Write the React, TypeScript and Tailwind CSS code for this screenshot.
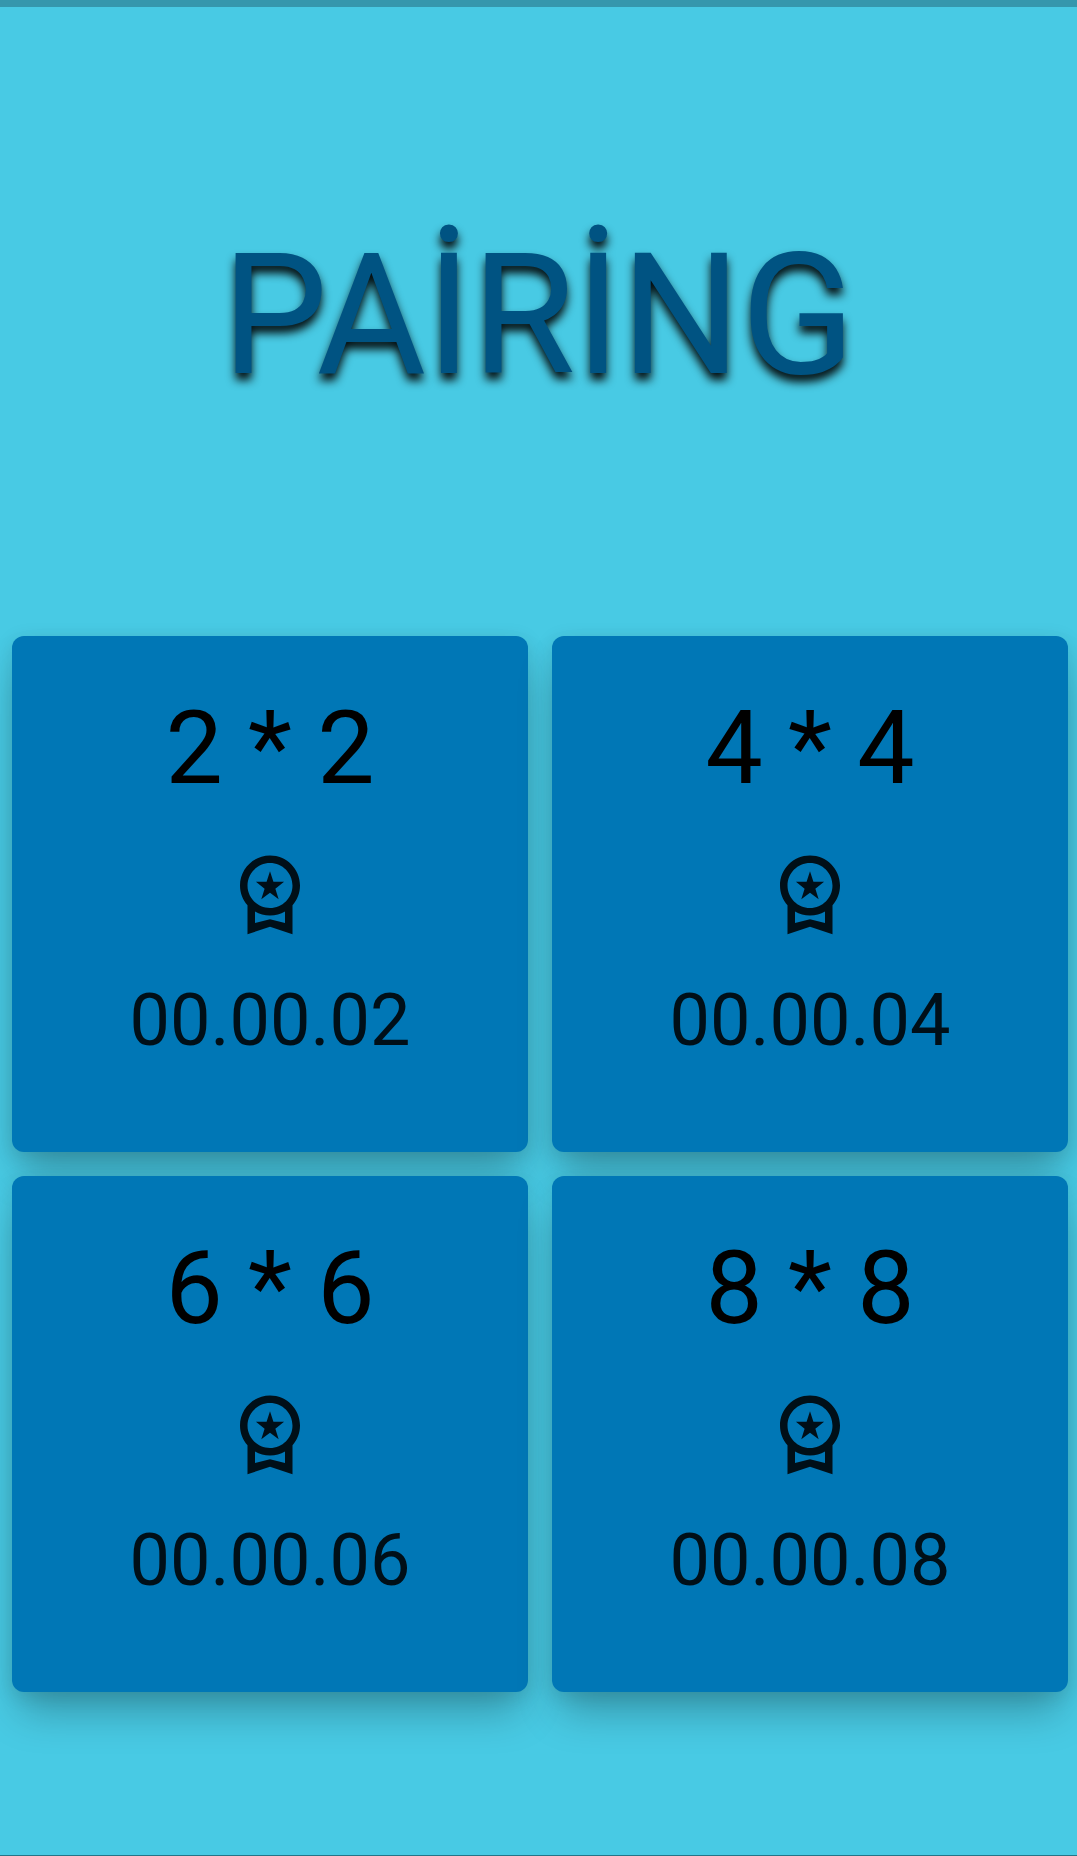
const levels = [
  { size: "2 * 2", time: "00.00.02" },
  { size: "4 * 4", time: "00.00.04" },
  { size: "6 * 6", time: "00.00.06" },
  { size: "8 * 8", time: "00.00.08" },
];

function Medal() {
  return (
    <svg className="mt-10 h-[90px] w-[90px]" viewBox="0 0 24 24" fill="#000f18">
      <path d="M9.68 13.69 12 11.93l2.31 1.76-.88-2.85L15.75 9h-2.84L12 6.19 11.09 9H8.25l2.31 1.84-.88 2.85zM20 10c0-4.42-3.58-8-8-8s-8 3.58-8 8c0 2.03.76 3.87 2 5.28V23l6-2 6 2v-7.72c1.24-1.41 2-3.25 2-5.28zm-8-6c3.31 0 6 2.69 6 6s-2.69 6-6 6-6-2.69-6-6 2.69-6 6-6zm0 15-4 1.02v-3.1c1.18.68 2.54 1.08 4 1.08s2.82-.4 4-1.08v3.1L12 19z" />
    </svg>
  );
}

export default function App() {
  return (
    <main className="flex h-[1856px] w-[1077px] flex-col overflow-hidden border-b border-t-[7px] border-b-[#257587] border-t-[#3597ad] bg-[#48cae4] font-[Roboto,sans-serif]">
      <header className="flex h-[629px] items-center justify-center pb-[11px]">
        <h1 className="text-[168px] leading-none text-[#005382] [text-shadow:0_7px_10px_rgba(0,0,0,0.95)]">PAİRİNG</h1>
      </header>
      <section className="grid grid-cols-[516px_516px] gap-6 pl-3">
        {levels.map((level) => (
          <article
            key={level.time}
            className="flex h-[516px] flex-col items-center rounded-xl bg-[#0077b6] pt-[52px] text-black shadow-[0_27px_42px_-8px_rgba(0,0,0,0.26),0_4px_20px_rgba(0,0,0,0.11)]"
          >
            <h2 className="text-[102px] leading-[120px]">{level.size}</h2>
            <Medal />
            <p className="mt-[41px] text-[72px] leading-[84px] text-[#000f18]">{level.time}</p>
          </article>
        ))}
      </section>
    </main>
  );
}
